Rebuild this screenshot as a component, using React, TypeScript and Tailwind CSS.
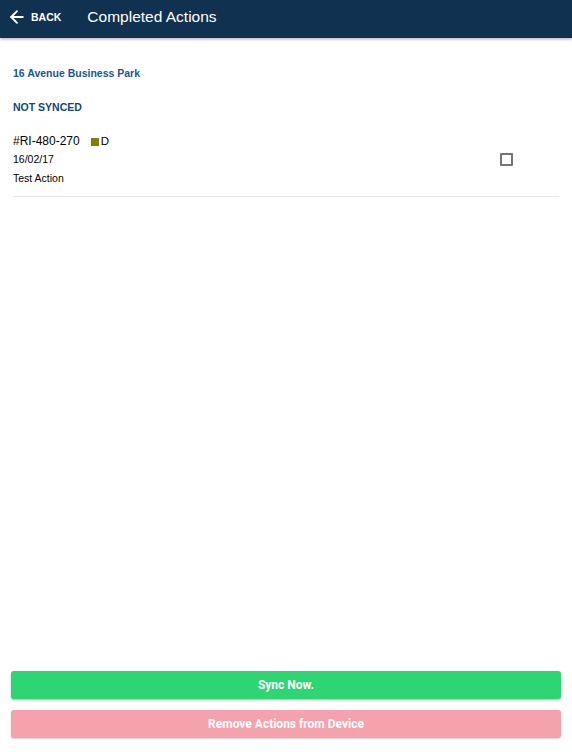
import { ArrowLeft } from "lucide-react"

export default function App() {
    return (
        <div className="flex h-[755px] w-[572px] flex-col bg-white font-['Liberation_Sans',Arial,sans-serif]">
            <header className="flex h-[38px] items-center bg-[#10314f] pb-[4px] shadow-[0_1px_3px_rgba(0,0,0,0.35)]">
                <div className="flex items-center pl-[7px]">
                    <ArrowLeft className="h-[20px] w-[20px] text-white" strokeWidth={2.2} />
                    <span className="ml-[4px] text-[10.5px] leading-[13px] font-bold text-white">BACK</span>
                </div>
                <h1 className="ml-[26px] text-[15.5px] leading-[18px] text-white">Completed Actions</h1>
            </header>

            <main className="flex-1 px-[13px] pt-[29px]">
                <p className="text-[10.5px] leading-[13px] font-bold text-[#1a5696]">16 Avenue Business Park</p>
                <p className="mt-[21px] text-[10.5px] leading-[13px] font-bold text-[#10477d]">NOT SYNCED</p>

                <div className="mt-[20px] flex items-center justify-between border-b border-[#e4e4e4] pb-[11px]">
                    <div>
                        <div className="flex items-center text-[12px] leading-[15px] text-black">
                            <span>#RI-480-270</span>
                            <span className="ml-[11px] inline-block h-[8px] w-[8px] bg-[#808000]" />
                            <span className="ml-[2px] text-[11.5px]">D</span>
                        </div>
                        <p className="mt-[4px] text-[10.5px] leading-[13px] text-black">16/02/17</p>
                        <p className="mt-[6px] text-[10.5px] leading-[13px] text-black">Test Action</p>
                    </div>
                    <div className="mr-[46px] h-[13px] w-[13px] rounded-[1px] border-2 border-[#757575]" />
                </div>
            </main>

            <footer className="flex flex-col gap-[11px] px-[11px] pb-[17px]">
                <button className="h-[28px] w-full rounded-[3px] bg-[#2ed573] font-['Roboto',sans-serif] text-[12px] font-bold text-white shadow-[0_1px_2px_rgba(0,0,0,0.3)]">
                    Sync Now.
                </button>
                <button className="h-[28px] w-full rounded-[3px] bg-[#f4a2ab] font-['Roboto',sans-serif] text-[12px] font-bold text-white shadow-[0_1px_2px_rgba(0,0,0,0.2)]">
                    Remove Actions from Device
                </button>
            </footer>
        </div>
    )
}
